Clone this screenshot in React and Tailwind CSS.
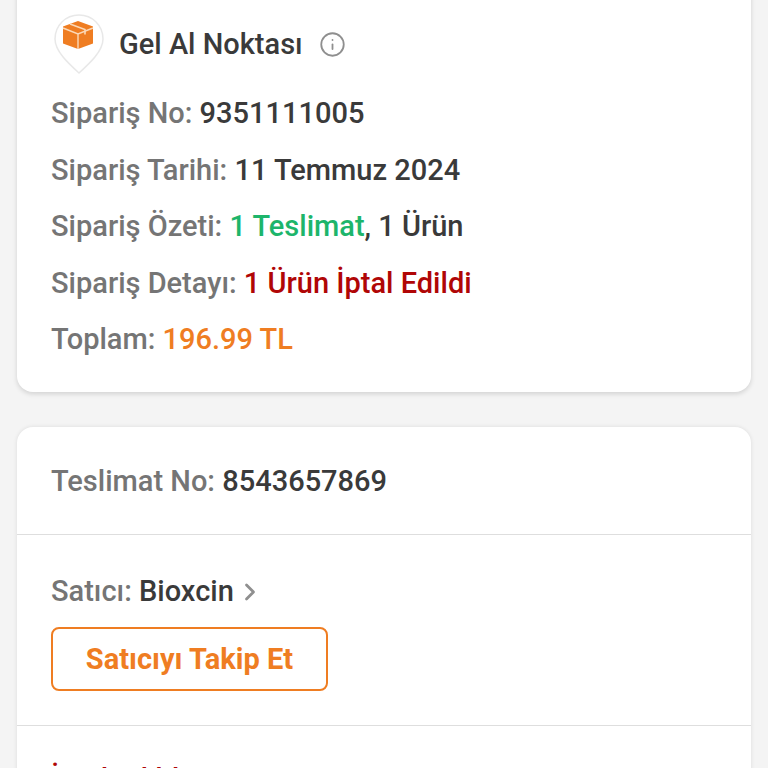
import { Info, ChevronRight } from 'lucide-react'

function Satir({ etiket, children }) {
  return (
    <p className="h-[56.5px] text-[29px] font-medium leading-[56.5px] text-[#757575] whitespace-nowrap">
      {etiket}: {children}
    </p>
  )
}

export default function App() {
  return (
    <div className="h-[768px] overflow-hidden bg-[#f4f4f4] px-[17px] font-['Roboto',sans-serif] text-[#3a3a3a]">
      <div className="-mt-[8px] rounded-b-[16px] bg-white pl-[34px] pr-4 pt-[8px] pb-[24px] shadow-[0_2px_5px_rgba(0,0,0,0.14)]">
        <div className="flex h-[85px] items-center">
          <svg width="54" height="66" viewBox="0 0 54 66" className="ml-[1px] mt-[6px] shrink-0">
            <path d="M27 2C13.5 2 3 12.5 3 26c0 12 13 24 24 34 11-10 24-22 24-34C51 12.5 40.5 2 27 2z" fill="#ffffff" stroke="#e8e8e8" strokeWidth="1.5" />
            <path d="M26 8l15 5.5v17L26 36l-15-5.5v-17z" fill="#ef7d22" />
            <path d="M11 15l15 6 15-6M26 21v15" fill="none" stroke="#fbd9b8" strokeWidth="1.4" />
            <path d="M18 11l15 5.5v5" fill="none" stroke="#fbd9b8" strokeWidth="1.6" />
          </svg>
          <span className="ml-[13px] mt-[5px] text-[29px] font-medium">Gel Al Noktası</span>
          <Info className="ml-[16px] mt-[3px] size-[27px] text-[#8f8f8f]" strokeWidth={1.6} />
        </div>
        <Satir etiket="Sipariş No"><span className="text-[#3a3a3a]">9351111005</span></Satir>
        <Satir etiket="Sipariş Tarihi"><span className="text-[#3a3a3a]">11 Temmuz 2024</span></Satir>
        <Satir etiket="Sipariş Özeti">
          <span className="text-[#1db56b]">1 Teslimat</span>
          <span className="text-[#3a3a3a]">, 1 Ürün</span>
        </Satir>
        <Satir etiket="Sipariş Detayı"><span className="text-[#b00606]">1 Ürün İptal Edildi</span></Satir>
        <Satir etiket="Toplam"><span className="text-[#ef7d22]">196.99 TL</span></Satir>
      </div>

      <div className="mt-[35px] rounded-t-[16px] bg-white shadow-[0_0_4px_rgba(0,0,0,0.1)]">
        <div className="flex h-[108px] items-center border-b border-[#dedede] pl-[34px] pt-[2px]">
          <Satir etiket="Teslimat No"><span className="text-[#3a3a3a]">8543657869</span></Satir>
        </div>
        <div className="h-[191px] border-b border-[#dedede] pl-[34px] pt-[29px]">
          <div className="flex h-[56px] items-center text-[29px] font-medium whitespace-nowrap text-[#757575]">
            Satıcı:&nbsp;<span className="text-[#3a3a3a]">Bioxcin</span>
            <ChevronRight className="ml-[2px] size-[28px] text-[#8f8f8f]" strokeWidth={2.4} />
          </div>
          <button className="mt-[7px] flex h-[64px] w-[277px] items-center justify-center rounded-[8px] border-2 border-[#ef7d22] pt-[2px] text-[29px] font-bold text-[#ef7d22]">
            Satıcıyı Takip Et
          </button>
        </div>
        <div className="pl-[34px] pt-[32px] text-[29px] font-medium text-[#b00606]">İptal Edildi</div>
      </div>
    </div>
  )
}
